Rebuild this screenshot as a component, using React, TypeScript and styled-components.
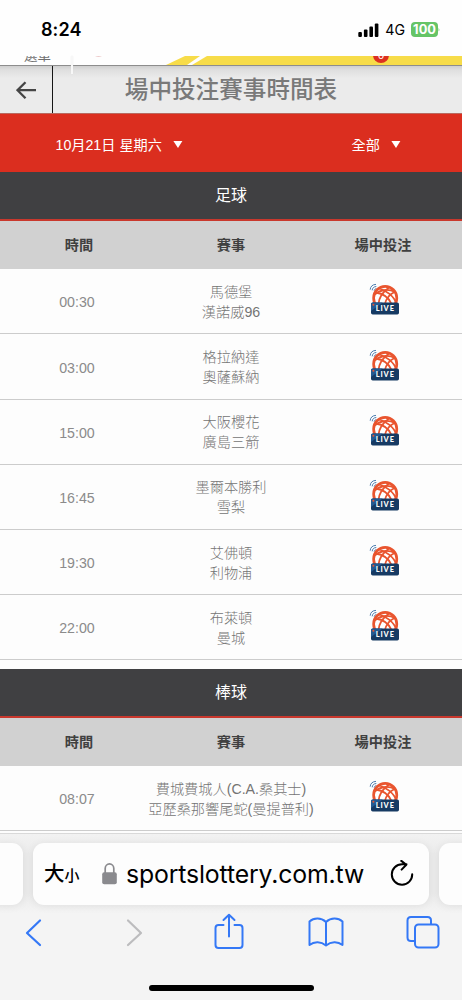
import React from "react";
import styled, { createGlobalStyle } from "styled-components";

const Global = createGlobalStyle`
  * { box-sizing: border-box; }
  body { margin: 0; background: #fff; }
`;

const Screen = styled.div`
  width: 462px;
  height: 1000px;
  overflow: hidden;
  display: flex;
  flex-direction: column;
  background: #fdfdfd;
  font-family: "Liberation Sans", "Noto Sans CJK TC", sans-serif;
`;

const StatusBar = styled.header`
  flex: none;
  height: 56px;
  padding: 3px 22px 0 41px;
  display: flex;
  align-items: center;
  background: #fefefe;
  color: #000;
`;
const Clock = styled.span`
  flex: 1;
  font: 600 18px/22px Inter, sans-serif;
  letter-spacing: 0.1px;
`;
const Network = styled.span`
  margin: 0 6px 0 6px;
  font: 400 14.2px/20px Inter, sans-serif;
`;
const Battery = styled.span`
  width: 27px;
  height: 15px;
  border-radius: 4px;
  background: #65c466;
  color: #fff;
  text-align: center;
  font: 700 12.8px/15.5px Inter, sans-serif;
`;

const PeekBar = styled.div`
  flex: none;
  height: 10px;
  position: relative;
  border-bottom: 1px solid #8d8d8d;
  background: #fefefe;
`;
const PeekClip = styled.div`
  position: absolute;
  inset: 0;
  overflow: hidden;
`;
const PeekMenu = styled.span`
  position: absolute;
  left: 24px;
  top: -9px;
  font-size: 13.5px;
  line-height: 18px;
  color: #707070;
`;
const PeekArt = styled.svg`
  position: absolute;
  inset: 0;
`;
const PeekDivider = styled.i`
  position: absolute;
  left: 71px;
  top: 0;
  width: 2px;
  height: 18px;
  background: #f7f7f7;
  box-shadow: 0 0 1px #d8d8d8;
`;
const PeekBadge = styled.span`
  position: absolute;
  left: 373px;
  top: -9px;
  width: 16px;
  height: 16px;
  border-radius: 50%;
  background: #dc3020;
  color: #fff;
  font-size: 11px;
  line-height: 17px;
  text-align: center;
`;

const TitleBar = styled.div`
  flex: none;
  height: 47px;
  display: flex;
  background: linear-gradient(#cfcfcf, #dfdfdf 4px, #ebebeb 12px);
`;
const Back = styled.div`
  width: 53px;
  border-right: 1px solid #151515;
  display: flex;
  align-items: center;
  justify-content: center;
`;
const Title = styled.h1`
  margin: 0;
  flex: 1;
  padding-right: 53px;
  text-align: center;
  font-size: 23.6px;
  line-height: 49px;
  font-weight: 500;
  color: #797979;
`;

const Filters = styled.div`
  flex: none;
  height: 59px;
  padding: 2px 61px 0 55.5px;
  display: flex;
  align-items: center;
  justify-content: space-between;
  background: #db2e1f;
  border-top: 1px solid #b9695f;
`;
const Filter = styled.div`
  display: flex;
  align-items: center;
  gap: 11px;
  font-size: 14.2px;
  color: #fff;
`;

const Sport = styled.h2`
  flex: none;
  margin: 0;
  height: 49px;
  border-bottom: 2px solid #c9382d;
  background: #404042;
  color: #fff;
  text-align: center;
  font-size: 16px;
  line-height: 48px;
  font-weight: 400;
`;
const Columns = styled.div`
  flex: none;
  height: 48.4px;
  display: grid;
  grid-template-columns: repeat(3, minmax(0, 1fr));
  background: #d1d1d1;
  color: #404040;
  text-align: center;
  font-size: 14.2px;
  line-height: 49px;
  font-weight: 600;
`;
const ColumnName = styled.span<{ $shift?: number }>`
  padding-left: ${(p) => Math.max(0, p.$shift ?? 0)}px;
  padding-right: ${(p) => Math.max(0, -(p.$shift ?? 0))}px;
`;
const Match = styled.div`
  flex: none;
  height: 65.1px;
  display: grid;
  grid-template-columns: repeat(3, minmax(0, 1fr));
  align-items: center;
  justify-items: center;
  border-bottom: 1px solid #cccccc;
  color: #747474;
  font-size: 14.2px;
  line-height: 20px;
  font-weight: 300;
`;
const Time = styled.span`
  padding-top: 2px;
  font-weight: 400;
  color: #8b8b8b;
`;
const Teams = styled.div`
  padding-top: 1.4px;
  text-align: center;
  white-space: nowrap;
`;
const Spacer = styled.div`
  flex: none;
  height: 9px;
`;

const BrowserChrome = styled.footer`
  flex: 1;
  margin-top: 2px;
  border-top: 1px solid #d9d9d9;
  background: #f4f4f4;
  display: flex;
  flex-direction: column;
  overflow: hidden;
`;
const Tabs = styled.div`
  flex: none;
  height: 79px;
  padding-top: 8.5px;
  margin: 0 -10px;
  display: flex;
  gap: 10px;
  background: linear-gradient(#f2f2f2, #ebebeb 20px, #ebebeb 60px, #f4f4f4);
`;
const Tab = styled.div<{ $width: number }>`
  width: ${(p) => p.$width}px;
  flex: none;
  height: 62px;
  border-radius: 11px;
  background: #fdfdfd;
  box-shadow: 0 1px 8px rgba(0, 0, 0, 0.07);
  display: flex;
  align-items: center;
  color: #000;
`;
const TextSize = styled.span`
  margin-left: 11px;
  width: 58px;
  font: 500 20.5px/30px "Noto Sans CJK TC", sans-serif;
  white-space: nowrap;
`;
const SmallGlyph = styled.span`
  font-size: 15px;
`;
const Address = styled.span`
  flex: 1;
  margin-left: 9px;
  font: 400 24.8px/32px Inter, sans-serif;
  letter-spacing: -0.14px;
  white-space: nowrap;
`;
const ReloadSlot = styled.span`
  display: flex;
  margin-right: 15.5px;
`;
const Tools = styled.nav`
  flex: none;
  height: 42px;
  padding-left: 24px;
  display: grid;
  grid-template-columns: 101px 89px 94px 97.5px 34px;
  justify-items: start;
  color: #3478f6;
`;
const HomeIndicator = styled.div`
  width: 165px;
  height: 6px;
  margin: 30px auto 0;
  border-radius: 3px;
  background: #000;
`;

const Caret = () => (
  <svg width="10" height="8" viewBox="0 0 10 8">
    <path d="M0.4 1h9L5 8z" fill="#fff" />
  </svg>
);

const LiveIcon = () => (
  <svg width="32" height="36" viewBox="0 0 32 36">
    <g fill="none" stroke="#4c7db0" strokeWidth="1">
      <path d="M1.2 6.7C1.3 3.5 3.6 1.4 7 1.4" />
      <path d="M3.2 7.3C3.3 5.1 4.8 3.6 7.3 3.5" />
      <path d="M5.2 7.7C5.3 6.5 6 5.8 7.3 5.6" />
    </g>
    <g fill="none" stroke="#e9552f" strokeWidth="1.8">
      <circle cx="16.2" cy="15" r="11.6" fill="#fff" strokeWidth="2.7" />
      <path d="M5.5 11.5C11 6.5 19 5.5 26 9" />
      <path d="M10.5 5.5C17 7.5 25 13 27 20" />
      <path d="M6.5 9.5C14 10.5 20 15 22.5 21" />
      <path d="M20 4.5C14.500 8.500 10 14 9.500 21" />
      <path d="M25.500 9C20.500 11.500 17 16 16 21" />
    </g>
    <rect x="2" y="19.500" width="28" height="12" rx="1.700" fill="#163a63" />
    <path d="M2 21.200a1.700 1.700 0 0 1 1.700-1.700h10L2 28z" fill="#245a91" />
    <circle cx="4.400" cy="21.800" r="1" fill="#e9552f" />
    <text x="16.300" y="28.300" textAnchor="middle" fill="#fff" fontFamily="Lato, sans-serif" fontWeight="900" fontSize="7.400" letterSpacing="0.900">LIVE</text>
  </svg>
);

const soccer = [
  ["00:30", "馬德堡", "漢諾威96"],
  ["03:00", "格拉納達", "奧薩蘇納"],
  ["15:00", "大阪櫻花", "廣島三箭"],
  ["16:45", "墨爾本勝利", "雪梨"],
  ["19:30", "艾佛頓", "利物浦"],
  ["22:00", "布萊頓", "曼城"],
];
const baseball = [["08:07", "費城費城人(C.A.桑其士)", "亞歷桑那響尾蛇(曼提普利)"]];

const Schedule = ({ sport, matches }: { sport: string; matches: string[][] }) => (
  <>
    <Sport>{sport}</Sport>
    <Columns>
      <ColumnName $shift={4}>時間</ColumnName>
      <ColumnName>賽事</ColumnName>
      <ColumnName $shift={-4}>場中投注</ColumnName>
    </Columns>
    {matches.map(([time, home, away]) => (
      <Match key={time}>
        <Time>{time}</Time>
        <Teams>
          <div>{home}</div>
          <div>{away}</div>
        </Teams>
        <LiveIcon />
      </Match>
    ))}
  </>
);

export default function App() {
  return (
    <Screen>
      <Global />
      <StatusBar>
        <Clock>8:24</Clock>
        <svg width="21" height="14" viewBox="0 0 21 14">
          <rect x="0.3" y="9" width="3.6" height="5" rx="1" />
          <rect x="5.9" y="6.5" width="3.6" height="7.5" rx="1" />
          <rect x="11.4" y="3.5" width="3.6" height="10.5" rx="1" />
          <rect x="16.8" y="0.4" width="3.6" height="13.6" rx="1" />
        </svg>
        <Network>4G</Network>
        <Battery>100</Battery>
        <svg width="2" height="5" viewBox="0 0 2 5">
          <path d="M.6 .5Q2 2.5 .6 4.5z" fill="#65c466" />
        </svg>
      </StatusBar>
      <PeekBar>
        <PeekClip>
          <PeekMenu>選單</PeekMenu>
          <PeekArt width="462" height="9" viewBox="0 0 462 9">
            <path d="M185 0H200L187 9H166z" fill="#f7dc49" />
            <path d="M207 0H462V9H192z" fill="#f7dc49" />
            <path d="M95 0h7q-3.500 1.500-7 0z" fill="#e7b9b9" />
          </PeekArt>
          <PeekBadge>0</PeekBadge>
        </PeekClip>
        <PeekDivider />
      </PeekBar>
      <TitleBar>
        <Back>
          <svg width="20" height="18" viewBox="0 0 20 18" fill="none" stroke="#454545" strokeWidth="2.300">
            <path d="M20 9.200H1.500M9.500 1.200L1.500 9.200L9.500 17.200" />
          </svg>
        </Back>
        <Title>場中投注賽事時間表</Title>
      </TitleBar>
      <Filters>
        <Filter>
          10月21日 星期六 <Caret />
        </Filter>
        <Filter>
          全部 <Caret />
        </Filter>
      </Filters>
      <Schedule sport="足球" matches={soccer} />
      <Spacer />
      <Schedule sport="棒球" matches={baseball} />
      <BrowserChrome>
        <Tabs>
          <Tab $width={33} />
          <Tab $width={396}>
            <TextSize>
              大<SmallGlyph>小</SmallGlyph>
            </TextSize>
            <svg width="15" height="22" viewBox="0 0 15 22">
              <path d="M3.200 11V5.500a4.300 4.600 0 0 1 8.600 0V11" fill="none" stroke="#8a8a8e" strokeWidth="1.700" />
              <rect x="0.200" y="9.300" width="14.600" height="12" rx="2" fill="#8a8a8e" />
            </svg>
            <Address>sportslottery.com.tw</Address>
            <ReloadSlot>
              <svg width="24" height="28" viewBox="0 0 24 28" fill="none" stroke="#000" strokeWidth="2" strokeLinecap="round" strokeLinejoin="round">
                <path d="M22.200 14.300A10.200 10.200 0 1 1 12 4.300H16.500M11.300 0.900L16.300 4.800L11.600 9.600" />
              </svg>
            </ReloadSlot>
          </Tab>
          <Tab $width={60} />
        </Tabs>
        <Tools>
          <svg width="20" height="42" viewBox="0 0 20 42" fill="none" stroke="currentColor" strokeWidth="2.200" strokeLinecap="round" strokeLinejoin="round">
            <path d="M16 7.500L3 20L16 32" />
          </svg>
          <svg width="20" height="42" viewBox="0 0 20 42" fill="none" stroke="#bcbcbe" strokeWidth="2.200" strokeLinecap="round" strokeLinejoin="round">
            <path d="M3 7.500L16 20L3 32" />
          </svg>
          <svg width="30" height="42" viewBox="0 0 30 42" fill="none" stroke="currentColor" strokeWidth="2" strokeLinecap="round" strokeLinejoin="round">
            <path d="M9.500 12H4.500Q1.500 12 1.500 15V32Q1.500 35 4.500 35H25.500Q28.500 35 28.500 32V15Q28.500 12 25.500 12H20.500M15 23.500V2M9.500 7L15 1.800L20.500 7" />
          </svg>
          <svg width="36" height="42" viewBox="0 0 36 42" fill="none" stroke="currentColor" strokeWidth="2" strokeLinejoin="round">
            <path d="M18 9C13 4.500 6 4.500 1.500 8.500V32C6.500 28 13 28.500 18 32.500C23 28.500 29.500 28 34.500 32V8.500C30 4.500 23 4.500 18 9V32.500" />
          </svg>
          <svg width="34" height="42" viewBox="0 0 34 42" fill="none" stroke="currentColor" strokeWidth="2">
            <path d="M8.500 28H5Q1.500 28 1.500 24.500V7.500Q1.500 4 5 4H21.500Q25 4 25 7.500V11" />
            <rect x="9" y="11.500" width="23.500" height="23" rx="3.500" />
          </svg>
        </Tools>
        <HomeIndicator />
      </BrowserChrome>
    </Screen>
  );
}
